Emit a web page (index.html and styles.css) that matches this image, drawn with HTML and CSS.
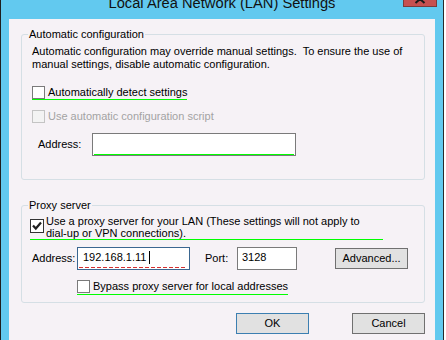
FILE: index.html
```html
<!DOCTYPE html>
<html lang="en">
<head>
<meta charset="utf-8">
<title>Local Area Network (LAN) Settings</title>
<link rel="stylesheet" href="styles.css">
</head>
<body>
<div class="screen">
  <div class="desk-left"></div>
  <div class="window">
    <div class="titlebar">
      <span class="title">Local Area Network (LAN) Settings</span>
      <span class="close"><svg class="close-x" width="34" height="7" viewBox="0 0 34 7"><polyline points="12.5,4 17,0 21.5,4" fill="none" stroke="#1a1a1a" stroke-width="2"/></svg></span>
    </div>
    <div class="panel">
      <fieldset class="group group-auto">
        <legend>Automatic configuration</legend>
        <div class="group-body">
          <p class="desc">Automatic configuration may override manual settings.&nbsp; To ensure the use of<br>manual settings, disable automatic configuration.</p>
          <label class="check check-detect"><span class="box"></span><span class="check-text">Automatically detect settings</span></label>
          <label class="check check-disabled"><span class="box"></span><span class="check-text">Use automatic configuration script</span></label>
          <div class="row addr-auto">
            <span class="lbl lbl-auto">Address:</span>
            <span class="field field-wide"><span class="green-line"></span></span>
          </div>
        </div>
      </fieldset>
      <fieldset class="group group-proxy">
        <legend>Proxy server</legend>
        <div class="group-body">
          <label class="check check-proxy"><span class="box box-checked"><svg width="12" height="12" viewBox="0 0 12 12"><polyline points="2,5.5 4.8,8.5 10,2.5" fill="none" stroke="#1f1f1f" stroke-width="2.2"/></svg></span><span class="check-text">Use a proxy server for your LAN (These settings will not apply to<br>dial-up or VPN connections).</span></label>
          <div class="row addr-proxy">
            <span class="lbl lbl-proxy">Address:</span>
            <span class="field field-ip">
              <span class="ip-text">192.168.1.11<span class="caret"></span></span>
              <span class="dash-line"></span>
            </span>
            <span class="lbl lbl-port">Port:</span>
            <span class="field field-port">3128</span>
            <button class="btn btn-adv" type="button">Advanced...</button>
          </div>
          <label class="check check-bypass"><span class="box"></span><span class="check-text">Bypass proxy server for local addresses</span></label>
        </div>
      </fieldset>
      <div class="actions">
        <button class="btn btn-ok" type="button">OK</button>
        <button class="btn btn-cancel" type="button">Cancel</button>
      </div>
    </div>
  </div>
  <div class="desk-right"></div>
</div>
</body>
</html>
```
FILE: styles.css
```css
* { box-sizing: border-box; }
html, body { margin: 0; padding: 0; }
body {
  width: 446px;
  height: 340px;
  overflow: hidden;
  font-family: "Liberation Sans", Arial, sans-serif;
  font-size: 11px;
  color: #000;
  background: #fff;
}
.screen { display: flex; width: 446px; height: 340px; }
.desk-left { width: 1px; background: #1e1e1e; flex: none; }
.desk-right { width: 3px; background: #fff; border-left: 1px solid #2a2a2a; flex: none; }
.window {
  width: 442px;
  flex: none;
  background: #62c9ef;
  display: flex;
  flex-direction: column;
  position: relative;
}
.titlebar {
  height: 19px;
  flex: none;
  display: flex;
  justify-content: center;
  align-items: flex-start;
}
.title {
  font-size: 14.7px;
  line-height: 15px;
  margin-top: -4px;
  color: #111;
  white-space: nowrap;
}
.close {
  position: absolute;
  top: 0;
  right: 6px;
  width: 34px;
  height: 7px;
  background: #c75050;
  border: 1px solid #7d3a3a;
  border-top: 0;
  overflow: hidden;
}
.close-x { display: block; margin: -1px 0 0 -1px; }
.panel {
  flex: 1;
  margin: 0 8px;
  background: #f6f2f6;
  display: flex;
  flex-direction: column;
}
.group {
  margin: 0 10px 0 12px;
  padding: 0 10px;
  border: 1px solid #d5dfe5;
  border-radius: 3px;
  min-width: 0;
}
.group legend {
  margin-left: -4px;
  padding: 0 1px;
  line-height: 14px;
}
.group-auto { margin-top: 8px; padding-bottom: 23px; }
.group-proxy { margin-top: 18px; padding-bottom: 7px; }
.group-body { display: flex; flex-direction: column; align-items: flex-start; }
.desc { margin: 4px 0 0; line-height: 13px; }
.check { display: flex; align-items: flex-start; line-height: 13px; }
.box {
  width: 13px;
  height: 13px;
  flex: none;
  border: 1px solid #7a7a7a;
  background: #fff;
  margin-right: 3px;
}
.check-detect {
  margin-top: 15px;
  padding-bottom: 0;
  border-bottom: 1px solid #00ff00;
}
.check-disabled { margin-top: 10px; color: #a3a3a3; }
.check-disabled .box { border-color: #c4c4c4; background: #f3f3f3; }
.row { display: flex; align-items: center; line-height: 13px; }
.addr-auto { margin-top: 10px; }
.lbl-auto { width: 54px; margin-left: 6px; }
.field {
  display: flex;
  background: #fff;
  border: 1px solid #7a7a7a;
  height: 23px;
}
.field-wide {
  display: block;
  width: 204px;
  padding: 20px 1px 0 1px;
}
.green-line { display: block; height: 1px; width: 200px; background: #00ff00; }
.check-proxy {
  margin-top: 3px;
  margin-left: -2px;
  width: 353px;
  line-height: 12px;
  border-bottom: 1px solid #00ff00;
}
.box-checked {
  width: 14px;
  height: 14px;
  margin-top: 4px;
  margin-right: 2px;
  border-color: #333;
  display: flex;
  align-items: center;
  justify-content: center;
}
.box-checked svg { display: block; }
.addr-proxy { margin-top: 7px; }
.lbl-proxy { width: 45px; }
.field-ip {
  width: 113px;
  flex-direction: column;
  border-color: #3a6690;
}
.ip-text { display: flex; align-items: flex-start; margin-top: 3px; padding-left: 5px; line-height: 13px; }
.caret { width: 1px; height: 13px; background: #000; margin-left: 3px; }
.dash-line {
  display: block;
  height: 1px;
  margin: 3px 2px 0 1px;
  background: repeating-linear-gradient(90deg, #d63030 0 4px, transparent 4px 6px);
}
.lbl-port { width: 32px; margin-left: 15px; }
.field-port {
  width: 60px;
  align-items: flex-start;
  padding: 3px 0 0 4px;
  line-height: 13px;
}
.btn {
  font-family: "Liberation Sans", Arial, sans-serif;
  font-size: 11px;
  color: #000;
  width: 73px;
  height: 21px;
  padding: 0;
  background: #e1e1e1;
  border: 1px solid #707070;
  border-radius: 0;
  line-height: 13px;
}
.btn-adv { margin-left: 38px; }
.check-bypass {
  margin-top: 10px;
  margin-left: 45px;
  border-bottom: 1px solid #00ff00;
}
.check-bypass .box { margin-bottom: 1px; }
.actions {
  display: flex;
  justify-content: flex-end;
  gap: 43px;
  margin: 10px 10px 0 0;
}
.btn-ok { border-color: #3c7fb1; }
```
